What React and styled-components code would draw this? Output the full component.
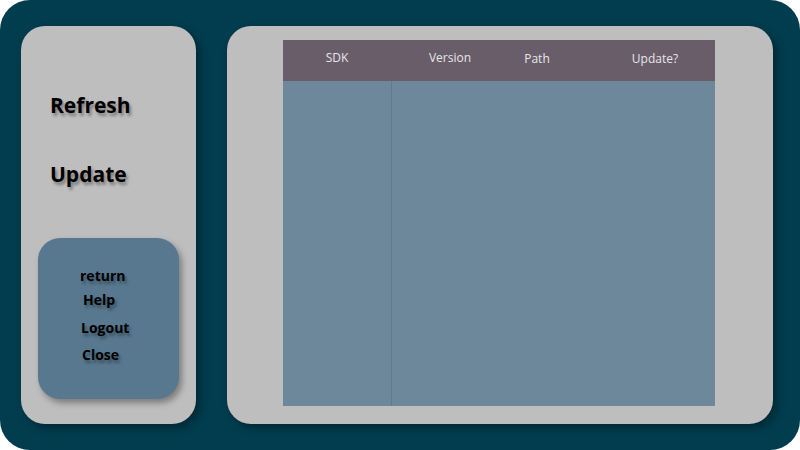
import React from 'react';
import styled, { createGlobalStyle } from 'styled-components';

const GlobalStyle = createGlobalStyle`
  html, body {
    margin: 0;
    padding: 0;
    background: #ffffff;
  }
  body {
    font-family: "Open Sans", "Noto Sans", sans-serif;
  }
`;

const columns = ['SDK', 'Version', 'Path', 'Update?'];
const menuItems = [
  { label: 'return', indent: 42, gap: 0 },
  { label: 'Help', indent: 45, gap: 4 },
  { label: 'Logout', indent: 43, gap: 8 },
  { label: 'Close', indent: 44, gap: 7 }
];

function App() {
  return (
    <>
      <GlobalStyle />
      <Frame>
        <Sidebar>
          <ActionButton>Refresh</ActionButton>
          <ActionButton>Update</ActionButton>
          <MenuCard>
            {menuItems.map((item) => (
              <MenuItem key={item.label} $indent={item.indent} $gap={item.gap}>
                {item.label}
              </MenuItem>
            ))}
          </MenuCard>
        </Sidebar>
        <MainPanel>
          <Table>
            <HeaderRow>
              {columns.map((col) => (
                <HeaderCell key={col}>{col}</HeaderCell>
              ))}
            </HeaderRow>
            <Body>
              <FirstColumn />
              <RestColumns />
            </Body>
          </Table>
        </MainPanel>
      </Frame>
    </>
  );
}

const Frame = styled.div`
  box-sizing: border-box;
  width: 800px;
  height: 450px;
  background: #013d4f;
  border-radius: 30px;
  padding: 26px 27px 26px 21px;
  display: flex;
  gap: 31px;
`;

const Sidebar = styled.div`
  box-sizing: border-box;
  width: 175px;
  height: 398px;
  background: #bebebe;
  border-radius: 24px;
  box-shadow: 4px 4px 8px rgba(0, 0, 0, 0.35);
  padding: 63px 17px 0;
  display: flex;
  flex-direction: column;
`;

const ActionButton = styled.div`
  font-size: 21px;
  font-weight: 700;
  color: #000;
  text-shadow: 2px 3px 3px rgba(0, 0, 0, 0.35);
  line-height: 32px;
  height: 32px;
  padding-left: 12px;
  margin-bottom: 37px;
`;

const MenuCard = styled.div`
  box-sizing: border-box;
  margin-top: 11px;
  width: 141px;
  height: 161px;
  background: #58788f;
  border-radius: 22px;
  box-shadow: 3px 4px 6px rgba(0, 0, 0, 0.35);
  padding-top: 28px;
  display: flex;
  flex-direction: column;
`;

const MenuItem = styled.div`
  font-size: 14px;
  font-weight: 700;
  color: #000;
  text-shadow: 2px 3px 3px rgba(0, 0, 0, 0.35);
  line-height: 20px;
  height: 20px;
  margin-top: ${(p) => p.$gap}px;
  padding-left: ${(p) => p.$indent}px;
`;

const MainPanel = styled.div`
  box-sizing: border-box;
  flex: 1;
  height: 398px;
  background: #bebebe;
  border-radius: 24px;
  box-shadow: 4px 4px 8px rgba(0, 0, 0, 0.35);
  padding: 14px 0 0 56px;
`;

const Table = styled.div`
  width: 432px;
  display: flex;
  flex-direction: column;
`;

const HeaderRow = styled.div`
  height: 41px;
  background: #6a5d6a;
  display: grid;
  grid-template-columns: 108px 118px 56px 150px;
  align-items: center;
`;

const HeaderCell = styled.div`
  font-size: 12px;
  color: #e6e6e6;
  text-align: center;
  margin-top: -6px;

  &:nth-child(3) {
    margin-top: -4px;
  }

  &:last-child {
    padding-left: 30px;
    margin-top: -4px;
  }
`;

const Body = styled.div`
  height: 325px;
  background: #6d889b;
  display: flex;
`;

const FirstColumn = styled.div`
  width: 108px;
  border-right: 1px solid #5f7b92;
`;

const RestColumns = styled.div`
  flex: 1;
`;

export default App;
